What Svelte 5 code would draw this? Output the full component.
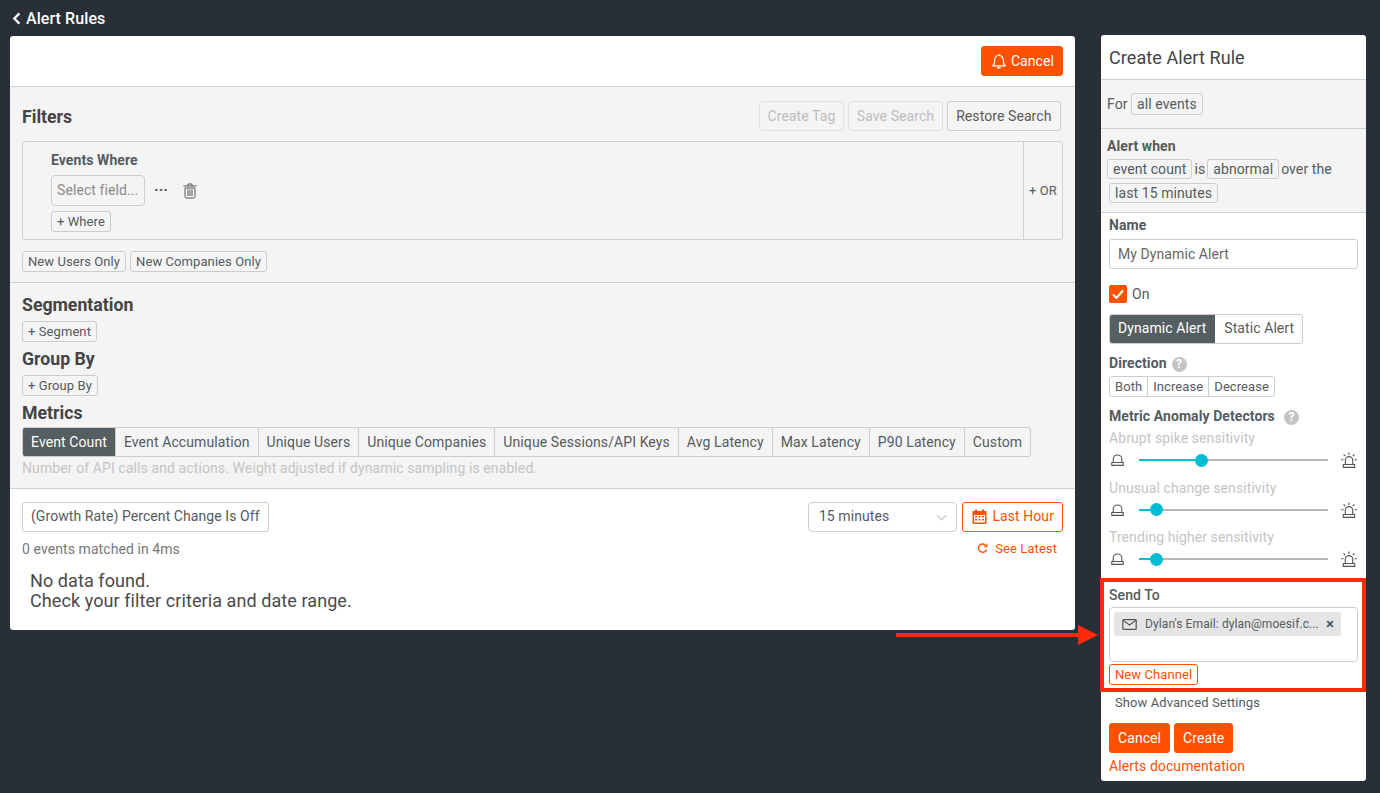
<script>
  const metrics = ['Event Count', 'Event Accumulation', 'Unique Users', 'Unique Companies', 'Unique Sessions/API Keys', 'Avg Latency', 'Max Latency', 'P90 Latency', 'Custom'];
  const sliders = [
    { label: 'Abrupt spike sensitivity', pct: 33.3 },
    { label: 'Unusual change sensitivity', pct: 9.5 },
    { label: 'Trending higher sensitivity', pct: 9.5 },
  ];
</script>

{#snippet lowBell()}
  <svg class="low" viewBox="0 0 13 12" fill="none" stroke="#555" stroke-width="1.1">
    <path d="M2.2 8.500V5.300a4.300 4.300 0 0 1 8.600 0v3.200" />
    <path d="M0.800 8.500h11.400v2.900H0.800z" />
  </svg>
{/snippet}

{#snippet siren()}
  <svg class="siren" viewBox="0 0 16 16" fill="none" stroke="#555" stroke-width="1.1">
    <path d="M4.300 12.500V8.300a3.700 3.700 0 0 1 7.400 0v4.200" />
    <path d="M2.300 12.500h11.400v2.900H2.300z" />
    <path d="M8 0.500v2.500M2.600 2.400l1.600 1.800M13.400 2.400l-1.600 1.800M0.200 7.800h2.300M13.500 7.800h2.300" />
  </svg>
{/snippet}

<div class="page">
  <div class="crumb">
    <svg viewBox="0 0 10 14" fill="none" stroke="#fff" stroke-width="2.600"><path d="M8.200 1.300 2.600 7l5.600 5.700" /></svg>
    Alert Rules
  </div>

  <div class="columns">
    <main class="panel">
      <div class="top">
        <button class="btn solid cancel-top">
          <svg viewBox="0 0 14 16" fill="none" stroke="#fff" stroke-width="1.200"><path d="M1 12.800c1.300-1.200 1.700-2.500 1.700-6a4.300 4.300 0 0 1 8.600 0c0 3.500.4 4.800 1.700 6z" /><path d="M5.400 14.800h3.200" stroke-width="1.500" /><path d="M7 2.500V1" /></svg>
          Cancel
        </button>
      </div>

      <section class="filters">
        <div class="filters-head">
          <h2>Filters</h2>
          <div class="actions">
            <button class="btn muted">Create Tag</button>
            <button class="btn muted">Save Search</button>
            <button class="btn restore">Restore Search</button>
          </div>
        </div>
        <div class="where-box">
          <div class="where-main">
            <div class="where-title">Events Where</div>
            <div class="where-row">
              <div class="select-field">Select field...</div>
              <span class="dots">···</span>
              <svg class="trash" viewBox="0 0 14 16" fill="none" stroke="#555" stroke-width="1">
                <path d="M0.500 3h13M5 3V1h4v2" />
                <path d="M2 5h10v8.500a1.500 1.500 0 0 1-1.500 1.500h-7A1.500 1.500 0 0 1 2 13.500zM5 6.500v6.500M7 6.500v6.500M9 6.500v6.500" />
              </svg>
            </div>
            <button class="chip">+ Where</button>
          </div>
          <div class="or">+ OR</div>
        </div>
        <div class="chip-row">
          <button class="chip">New Users Only</button>
          <button class="chip">New Companies Only</button>
        </div>
      </section>

      <section class="segments">
        <h2>Segmentation</h2>
        <button class="chip">+ Segment</button>
        <h2 class="next">Group By</h2>
        <button class="chip">+ Group By</button>
        <h2 class="next">Metrics</h2>
        <div class="tabs">
          {#each metrics as m, i}
            <div class="tab" class:on={i === 0}>{m}</div>
          {/each}
        </div>
        <p class="hint">Number of API calls and actions. Weight adjusted if dynamic sampling is enabled.</p>
      </section>

      <section class="results">
        <div class="results-bar">
          <button class="btn plain">(Growth Rate) Percent Change Is Off</button>
          <div class="range">
            <div class="interval">
              15 minutes
              <svg viewBox="0 0 12 7" fill="none" stroke="#ccc" stroke-width="1.500"><path d="M1 1l5 5 5-5" /></svg>
            </div>
            <button class="btn outline">
              <svg viewBox="0 0 15 15" fill="#ff5000">
                <path d="M3 0.500h2v2H3zM10 0.500h2v2h-2z" />
                <path fill-rule="evenodd" d="M0.500 2h14v12a1 1 0 0 1-1 1h-12a1 1 0 0 1-1-1zM2 6v7.500h11V6z" />
                <path d="M3 7h2v1.500H3zM6.500 7h2v1.500h-2zM10 7h2v1.500h-2zM3 10h2v1.500H3zM6.500 10h2v1.500h-2zM10 10h2v1.500h-2z" />
              </svg>
              Last Hour
            </button>
          </div>
        </div>
        <div class="status">
          <span>0 events matched in 4ms</span>
          <span class="latest">
            <svg viewBox="0 0 12 12" fill="none" stroke="#ff5000" stroke-width="1.500"><path d="M10 3.200A4.500 4.500 0 1 0 10.500 7" /><path d="M10.800 0.600v3.400h-3.400" stroke-width="1.100" /></svg>
            See Latest
          </span>
        </div>
        <p class="empty">No data found.<br />Check your filter criteria and date range.</p>
      </section>
    </main>

    <aside class="panel side">
      <h1>Create Alert Rule</h1>
      <div class="for-row">For <span class="tag">all events</span></div>
      <div class="when">
        <strong>Alert when</strong>
        <div class="when-line"><span class="tag">event count</span><span>is</span><span class="tag">abnormal</span><span>over the</span></div>
        <div class="when-line indent"><span class="tag">last 15 minutes</span></div>
      </div>

      <div class="form">
        <label class="field-label" for="alert-name">Name</label>
        <input id="alert-name" class="name" value="My Dynamic Alert" />
        <div class="on-row">
          <span class="check">
            <svg viewBox="0 0 18 18" fill="none" stroke="#fff" stroke-width="2.200"><path d="M4 9.500l3.500 3.500L14 5.500" /></svg>
          </span>
          On
        </div>
        <div class="toggle">
          <div class="seg on">Dynamic Alert</div>
          <div class="seg">Static Alert</div>
        </div>

        <div class="field-label dir">Direction<span class="help">?</span></div>
        <div class="mini">
          <div>Both</div><div>Increase</div><div>Decrease</div>
        </div>

        <div class="field-label det">Metric Anomaly Detectors<span class="help wide">?</span></div>
        {#each sliders as s}
          <div class="slider-label">{s.label}</div>
          <div class="slider">
            {@render lowBell()}
            <div class="track">
              <div class="fill" style="width: {s.pct}%"></div>
              <div class="thumb" style="left: {s.pct}%"></div>
            </div>
            {@render siren()}
          </div>
        {/each}

        <div class="send-label">Send To</div>
        <div class="send-box">
          <div class="channel">
            <svg viewBox="0 0 16 12" fill="none" stroke="#555" stroke-width="1.300"><rect x="0.700" y="0.700" width="14.600" height="10.600" rx="0.800" /><path d="M1 1.500l7 5 7-5" /></svg>
            <span class="channel-text">Dylan's Email: dylan@moesif.c...</span>
            <span class="x">×</span>
          </div>
        </div>
        <button class="chip orange">New Channel</button>
        <div class="advanced">Show Advanced Settings</div>
        <div class="foot">
          <button class="btn solid">Cancel</button>
          <button class="btn solid">Create</button>
        </div>
        <div class="docs">Alerts documentation</div>
      </div>
    </aside>
  </div>

  <div class="callout"></div>
  <svg class="arrow" viewBox="0 0 206 24" fill="#ff2a0a"><rect x="0" y="10" width="184" height="4" /><path d="M182 2l20 10-20 10z" /></svg>
</div>

<style>
  :global(body) {
    margin: 0;
    background: #282f37;
    font-family: Roboto, 'Liberation Sans', sans-serif;
    color: #555b5e;
    letter-spacing: 0.08px;
  }

  .page {
    position: relative;
    width: 1380px;
    height: 793px;
    overflow: hidden;
  }

  button {
    font: inherit;
    letter-spacing: inherit;
    color: inherit;
    background: none;
    cursor: pointer;
  }

  .crumb {
    height: 36px;
    padding-left: 12px;
    display: flex;
    align-items: center;
    gap: 5px;
    color: #fff;
    font-size: 16px;
    font-weight: 500;
  }

  .crumb svg {
    width: 9px;
    height: 13px;
  }

  .columns {
    display: flex;
    align-items: flex-start;
    gap: 26px;
    padding-left: 10px;
  }

  .panel {
    background: #fff;
    border-radius: 3px;
    overflow: hidden;
  }

  main.panel {
    width: 1065px;
    height: 594px;
  }

  .top {
    height: 51px;
    border-bottom: 1px solid #ccd1d1;
    display: flex;
    justify-content: flex-end;
    align-items: flex-start;
    padding: 10px 12px 0 0;
    box-sizing: border-box;
  }

  .btn {
    height: 30px;
    padding: 0 8px;
    border: 1px solid #ccc;
    border-radius: 3px;
    font-size: 14px;
    display: inline-flex;
    align-items: center;
    gap: 4px;
    box-sizing: border-box;
    white-space: nowrap;
  }

  .btn svg {
    width: 15px;
    height: 15px;
  }

  .btn.solid {
    background: #ff5000;
    border-color: #ff5000;
    color: #fff;
  }

  .cancel-top {
    padding: 0 8px 0 10px;
    gap: 5px;
  }

  .btn.cancel-top svg {
    width: 14px;
    height: 16px;
  }

  .btn.muted {
    color: #bdbdbd;
    border-color: #e0e0e0;
  }

  .btn.restore {
    padding: 0 8.5px;
  }

  .btn.plain {
    background: #fff;
  }

  .btn.outline {
    border-color: #ff5000;
    color: #ff5000;
    padding: 0 8px 0 9px;
    gap: 5px;
  }

  .filters {
    background: #f4f4f4;
    border-bottom: 1px solid #ccd1d1;
    height: 196px;
    box-sizing: border-box;
    padding: 14px 12px 0;
  }

  .filters-head {
    display: flex;
    justify-content: space-between;
    align-items: center;
    height: 30px;
    padding-right: 2px;
  }

  .filters-head h2 {
    margin-top: 1px;
  }

  h2 {
    margin: 0;
    font-size: 17.7px;
    line-height: 22px;
    font-weight: 700;
    color: #444;
    letter-spacing: 0;
  }

  .actions {
    display: flex;
    gap: 3.5px;
  }

  .where-box {
    margin-top: 10px;
    height: 99px;
    box-sizing: border-box;
    border: 1px solid #ccd1d1;
    border-radius: 3px;
    display: flex;
    justify-content: space-between;
  }

  .where-main {
    padding: 10px 0 0 28px;
  }

  .where-title {
    font-size: 14px;
    font-weight: 700;
    line-height: 17px;
  }

  .where-row {
    display: flex;
    align-items: center;
    margin-top: 6px;
  }

  .select-field {
    width: 94px;
    height: 31px;
    box-sizing: border-box;
    border: 1px solid #ccc;
    border-radius: 4px;
    padding-left: 5px;
    font-size: 14px;
    line-height: 29px;
    color: #8b8b8b;
    white-space: nowrap;
  }

  .dots {
    margin-left: 9px;
    font-size: 15.5px;
    font-weight: 700;
    line-height: 17px;
    letter-spacing: 0;
    color: #555;
  }

  .trash {
    width: 14px;
    height: 16px;
    margin-left: 15px;
  }

  .chip {
    display: block;
    height: 21px;
    padding: 0 5px;
    border: 1px solid #ccc;
    border-radius: 3px;
    font-size: 13px;
    line-height: 19px;
    white-space: nowrap;
    box-sizing: border-box;
  }

  .where-main .chip {
    margin-top: 5px;
  }

  .or {
    width: 38px;
    border-left: 1px solid #ccd1d1;
    display: flex;
    align-items: center;
    justify-content: center;
    font-size: 13px;
  }

  .chip-row {
    display: flex;
    gap: 4px;
    margin-top: 11px;
  }

  .segments {
    background: #f4f4f4;
    border-bottom: 1px solid #ccd1d1;
    height: 206px;
    box-sizing: border-box;
    padding: 11px 12px 0;
  }

  .segments .chip {
    margin-top: 5px;
  }

  h2.next {
    margin-top: 6px;
  }

  .tabs {
    display: flex;
    width: max-content;
    margin-top: 3px;
    height: 30px;
    box-sizing: border-box;
    border: 1px solid #ccc;
    border-radius: 3px;
    overflow: hidden;
    font-size: 14px;
    letter-spacing: 0.1px;
  }

  .tab {
    padding: 0 8px;
    line-height: 28px;
    border-left: 1px solid #ccc;
    white-space: nowrap;
  }

  .tab:first-child {
    border-left: 0;
  }

  .tab.on {
    background: #555e60;
    color: #fff;
  }

  .hint {
    margin: 2px 0 0;
    font-size: 14px;
    line-height: 18px;
    letter-spacing: 0.1px;
    color: #c4c4c4;
  }

  .results {
    padding: 13px 12px 0;
  }

  .results-bar {
    display: flex;
    justify-content: space-between;
  }

  .results-bar .btn,
  .interval {
    padding-bottom: 2px;
  }

  .range {
    display: flex;
    gap: 5px;
  }

  .interval {
    width: 149px;
    height: 30px;
    box-sizing: border-box;
    border: 1px solid #ccc;
    border-radius: 4px;
    display: flex;
    align-items: center;
    justify-content: space-between;
    padding: 0 9px 2px 9.5px;
    font-size: 14px;
  }

  .interval svg {
    width: 11px;
    height: 7px;
    margin-top: 2px;
  }

  .status {
    display: flex;
    justify-content: space-between;
    margin-top: 8px;
    font-size: 14px;
    line-height: 18px;
    color: #777;
  }

  .latest {
    display: flex;
    align-items: center;
    gap: 7px;
    color: #ff5000;
    font-size: 13px;
    margin: -1px 6px 0 0;
  }

  .latest svg {
    width: 11px;
    height: 11px;
  }

  .empty {
    margin: 13px 0 0 8px;
    font-size: 18px;
    line-height: 20px;
    color: #4a4a4a;
  }

  .side {
    width: 265px;
    height: 746px;
    margin-top: -1px;
    font-size: 14px;
  }

  h1 {
    margin: 0;
    height: 45px;
    box-sizing: border-box;
    padding: 12px 8px 0;
    font-size: 18px;
    line-height: 21px;
    font-weight: 400;
    color: #444;
    border-bottom: 1px solid #ccd1d1;
  }

  .for-row {
    height: 49px;
    box-sizing: border-box;
    background: #f4f4f4;
    border-bottom: 1px solid #ccd1d1;
    padding: 13px 6px 0;
    display: flex;
    align-items: flex-start;
    gap: 3px;
    line-height: 22px;
  }

  .tag {
    display: inline-block;
    border: 1px solid #ccc;
    border-radius: 3px;
    padding: 0 5px;
    line-height: 18px;
    white-space: nowrap;
  }

  .for-row .tag {
    line-height: 20px;
    padding: 0 5.5px;
  }

  .when {
    height: 84px;
    box-sizing: border-box;
    background: #f4f4f4;
    border-bottom: 1px solid #ccd1d1;
    padding: 9px 6px 0;
    line-height: 16px;
  }

  .when strong {
    display: block;
    font-size: 14px;
  }

  .when-line {
    display: flex;
    gap: 2px;
    margin-top: 5px;
    line-height: 20px;
  }

  .when-line + .when-line {
    margin-top: 4px;
  }

  .when-line.indent {
    padding-left: 2px;
  }

  .form {
    padding: 0 8px;
  }

  .field-label {
    display: block;
    font-size: 14px;
    font-weight: 700;
    line-height: 18px;
    margin-top: 3px;
  }

  .name {
    display: block;
    width: 249px;
    height: 30px;
    margin-top: 5px;
    padding: 0 8px;
    box-sizing: border-box;
    border: 1px solid #ccc;
    border-radius: 3px;
    font: inherit;
    letter-spacing: inherit;
    color: #666;
    outline: none;
  }

  .on-row {
    display: flex;
    align-items: center;
    gap: 5px;
    margin-top: 16px;
    height: 18px;
  }

  .check {
    width: 18px;
    height: 18px;
    border-radius: 2px;
    background: #ff5000;
  }

  .check svg {
    display: block;
  }

  .toggle {
    display: flex;
    width: max-content;
    margin-top: 11px;
    height: 30px;
    box-sizing: border-box;
    border: 1px solid #ccc;
    border-radius: 3px;
    overflow: hidden;
  }

  .seg {
    padding: 0 8px 0 9px;
    line-height: 27px;
  }

  .seg.on {
    padding: 0 9px 0 8px;
    background: #555e60;
    color: #fff;
  }

  .dir,
  .det {
    display: flex;
    align-items: center;
  }

  .dir {
    margin-top: 10px;
  }

  .help {
    width: 15px;
    height: 15px;
    margin: 2px 0 0 5px;
    border-radius: 50%;
    background: #c4c4c4;
    color: #fff;
    font-size: 12px;
    line-height: 15px;
    text-align: center;
  }

  .help.wide {
    margin-left: 9px;
  }

  .mini {
    display: flex;
    width: max-content;
    margin-top: 4px;
    height: 21px;
    box-sizing: border-box;
    border: 1px solid #ccc;
    border-radius: 3px;
    font-size: 13px;
    line-height: 19px;
  }

  .mini div {
    padding: 0 5px;
    border-left: 1px solid #ccc;
  }

  .mini div:first-child {
    border-left: 0;
  }

  .det {
    margin-top: 10px;
  }

  .slider-label {
    margin-top: 4px;
    line-height: 18px;
    color: #c4c4c4;
  }

  .slider {
    display: flex;
    align-items: center;
    height: 18px;
    margin-top: 4px;
    margin-bottom: 9.500px;
  }

  .low {
    width: 13px;
    height: 12px;
    margin-left: 2px;
  }

  .track {
    position: relative;
    width: 189px;
    height: 2px;
    margin: 0 13px 0 15px;
    background: #b8b8b8;
  }

  .fill {
    height: 2px;
    background: #00bcd4;
  }

  .thumb {
    position: absolute;
    top: -5.500px;
    width: 13px;
    height: 13px;
    margin-left: -6.500px;
    border-radius: 50%;
    background: #00bcd4;
  }

  .siren {
    width: 16px;
    height: 16px;
  }

  .send-label {
    margin-top: 18px;
    font-weight: 500;
    line-height: 18px;
  }

  .send-box {
    margin-top: 3px;
    width: 249px;
    height: 55px;
    box-sizing: border-box;
    border: 1px solid #ccc;
    border-radius: 4px;
    padding: 4px;
  }

  .channel {
    width: 227px;
    height: 24px;
    background: #e5e5e5;
    border-radius: 2px;
    display: flex;
    align-items: center;
    font-size: 12px;
    letter-spacing: 0.1px;
    padding: 0 7px 0 8px;
    box-sizing: border-box;
  }

  .channel svg {
    width: 15px;
    height: 11px;
    flex: none;
  }

  .channel-text {
    margin-left: 8px;
    flex: 1;
    white-space: nowrap;
  }

  .x {
    font-size: 15px;
    font-weight: 700;
    line-height: 15px;
  }

  .chip.orange {
    margin-top: 2px;
    color: #ff5000;
    border-color: #ff5000;
  }

  .advanced {
    margin: 9px 0 0 6px;
    font-size: 13px;
    line-height: 18px;
  }

  .foot {
    display: flex;
    gap: 4px;
    margin-top: 11px;
  }

  .docs {
    margin-top: 4px;
    color: #ff5000;
    line-height: 18px;
  }

  .callout {
    position: absolute;
    left: 1100px;
    top: 578px;
    width: 266px;
    height: 114px;
    box-sizing: border-box;
    border: 4px solid #ff2a0a;
  }

  .arrow {
    position: absolute;
    left: 896px;
    top: 623px;
    width: 206px;
    height: 24px;
  }
</style>
